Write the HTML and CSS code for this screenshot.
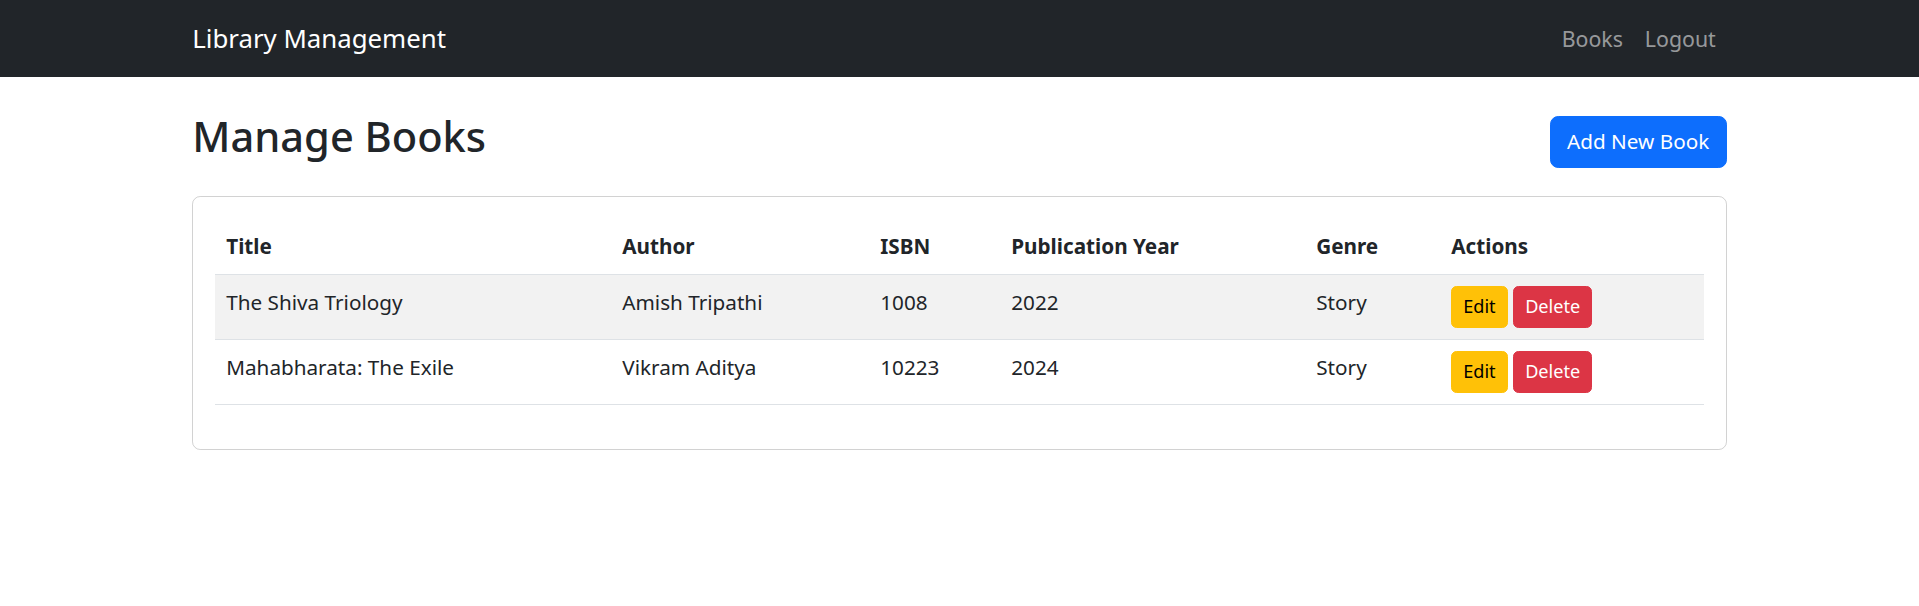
FILE: index.html
```html
<!DOCTYPE html>
<html lang="en">
<head>
<meta charset="utf-8">
<title>Library Management</title>
<link rel="stylesheet" href="styles.css">
</head>
<body>
<nav class="navbar">
  <div class="container nav-inner">
    <a class="brand" href="#">Library Management</a>
    <ul class="nav-links">
      <li><a href="#">Books</a></li>
      <li><a href="#">Logout</a></li>
    </ul>
  </div>
</nav>
<main class="container main">
  <div class="page-head">
    <h2>Manage Books</h2>
    <a class="btn btn-primary" href="#">Add New Book</a>
  </div>
  <div class="card">
    <div class="card-body">
      <table class="table">
        <thead>
          <tr>
            <th class="c-title">Title</th>
            <th class="c-author">Author</th>
            <th class="c-isbn">ISBN</th>
            <th class="c-year">Publication Year</th>
            <th class="c-genre">Genre</th>
            <th class="c-actions">Actions</th>
          </tr>
        </thead>
        <tbody>
          <tr class="striped">
            <td>The Shiva Triology</td>
            <td>Amish Tripathi</td>
            <td>1008</td>
            <td>2022</td>
            <td>Story</td>
            <td><a class="btn btn-sm btn-warning" href="#">Edit</a><a class="btn btn-sm btn-danger" href="#">Delete</a></td>
          </tr>
          <tr>
            <td>Mahabharata: The Exile</td>
            <td>Vikram Aditya</td>
            <td>10223</td>
            <td>2024</td>
            <td>Story</td>
            <td><a class="btn btn-sm btn-warning" href="#">Edit</a><a class="btn btn-sm btn-danger" href="#">Delete</a></td>
          </tr>
        </tbody>
      </table>
    </div>
  </div>
</main>
</body>
</html>
```

FILE: styles.css
```css
* { box-sizing: border-box; }
html, body { margin: 0; padding: 0; }
body {
  font-family: "Noto Sans", "Open Sans", sans-serif;
  font-size: 20.7px;
  line-height: 33px;
  color: #212529;
  background: #fff;
}
a { text-decoration: none; }
.container {
  max-width: 1567.5px;
  margin: 0 auto;
  padding: 0 16.5px;
}
.navbar {
  background: #212529;
  padding: 11px 0;
}
.nav-inner {
  display: flex;
  justify-content: space-between;
  align-items: center;
}
.brand {
  color: #fff;
  font-size: 25.8px;
  line-height: 41.25px;
  padding: 6.875px 0;
}
.nav-links {
  list-style: none;
  margin: 0;
  padding: 0;
  display: flex;
}
.nav-links a {
  display: block;
  padding: 11px;
  font-size: 21.3px;
  color: rgba(255,255,255,.55);
}
.main { padding-top: 33px; }
.page-head {
  display: flex;
  justify-content: space-between;
  align-items: center;
  margin-bottom: 22px;
}
h2 {
  margin: 0 0 11px;
  font-size: 41.6px;
  font-weight: 500;
  line-height: 52.8px;
}
.btn {
  display: inline-block;
  border: 1.375px solid transparent;
  font-size: 20.7px;
  line-height: 33px;
  padding: 8.25px 16.5px;
  border-radius: 8.25px;
  text-align: center;
}
.btn-primary { background: #0d6efd; border-color: #0d6efd; color: #fff; }
.btn-sm {
  font-size: 18.1px;
  line-height: 28.875px;
  padding: 5.5px 11px;
  border-radius: 5.5px;
}
.btn-warning { background: #ffc107; border-color: #ffc107; color: #000; margin-right: 5.5px; }
.btn-danger { background: #dc3545; border-color: #dc3545; color: #fff; }
.card {
  border: 1px solid rgba(0,0,0,.175);
  border-radius: 8.25px;
}
.card-body { padding: 22px; }
.table {
  width: 100%;
  border-collapse: collapse;
  margin-bottom: 22px;
}
.table tbody, .table tbody tr, .table tbody td { vertical-align: top; }
.table thead, .table thead tr, .table thead th { vertical-align: bottom; }
.table th, .table td {
  padding: 11px;
  border-bottom: 1px solid #dee2e6;
  text-align: left;
}
.table thead th { font-weight: 700; }
.table tr.striped td { background: #f2f2f2; }
.c-title { width: 396px; }
.c-author { width: 258px; }
.c-isbn { width: 131px; }
.c-year { width: 305px; }
.c-genre { width: 135px; }
```
